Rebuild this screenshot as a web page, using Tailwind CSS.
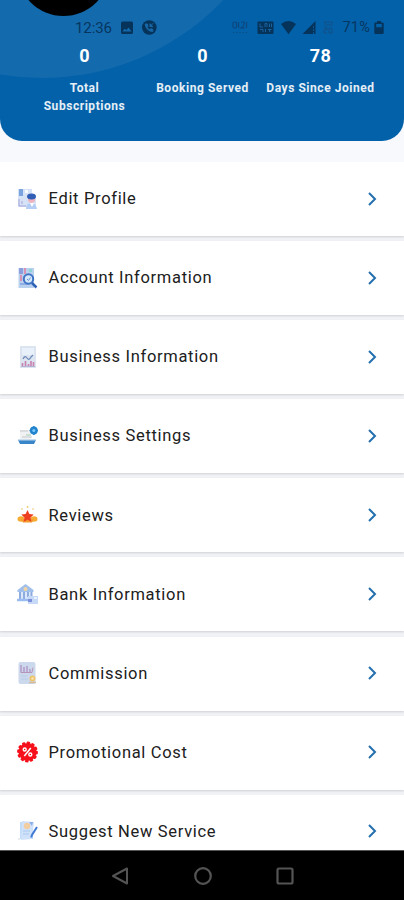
<!DOCTYPE html>
<html lang="en">
<head>
<meta charset="utf-8">
<title>Profile</title>
<script src="https://cdn.jsdelivr.net/npm/@tailwindcss/browser@4"></script>
</head>
<body class="w-[404px] h-[900px] overflow-hidden bg-[#f8f9fd] font-[Roboto,sans-serif] text-[#202020]">
<div class="flex flex-col h-[900px]">
  <header class="relative shrink-0 h-[140.5px] rounded-b-[22px] bg-[#0361a9] overflow-hidden text-white">
    <svg class="absolute inset-0" width="404" height="141"><circle cx="42" cy="-172" r="250" fill="#136aad"/><circle cx="63.5" cy="-30.3" r="46.3" fill="#000"/></svg>
    <div class="absolute inset-x-0 top-[18px] h-[20px] text-[#06365f]">
      <span class="absolute left-[75px] top-0 text-[15px] leading-[20px] -tracking-[0.1px]">12:36</span>
      <svg class="absolute left-0 top-0" width="404" height="20" fill="#06335a">
        <path fill-rule="evenodd" d="M122.500 3.500h9q1.500 0 1.500 1.500v9.500q0 1.500-1.500 1.500h-9q-1.500 0-1.500-1.500v-9.500q0-1.500 1.500-1.500zM122.500 13.500h9l-3-4-2.200 2.800-1.500-1.800z"/>
        <circle cx="149.300" cy="9.500" r="7.300"/>
        <path d="M145.300 6c0 4 3.500 7.500 7.500 7.500v-2.200l-2.200-.6-1 1c-1.200-.6-2-1.500-2.600-2.600l1-1-.6-2.100zM150 8.500l3.300-3.300M150 5.500v3h3" stroke="#1769a8" stroke-width="1" fill="#1769a8"/>
        <g fill="none" stroke="#0c477d" stroke-width="1.200"><rect x="233" y="4" width="3.500" height="6" rx="1.500"/><path d="M238.500 4v6M241 4h3q1 3-3 6h4M246.500 4v6"/><path d="M233 14.500h15" stroke-dasharray="2 1" opacity=".6"/></g>
        <rect x="257.500" y="3.500" width="16" height="12.500" rx="1"/>
        <path d="M260 5.500v3.500h3M265 9v-3.500h2v3.500M269.500 5.500v3.500M271.500 5.500v3.500M260 11.500h3v2.500M265.500 11v3M268 11.500h3.500M269.700 11.500v2.500" fill="none" stroke="#1763a0"/>
        <path d="M281 6q7.500-6 15 0l-7.500 10.200z"/>
        <path d="M302.500 16L315.500 3v13z"/><path d="M313.500 8v8" stroke="#0361a9" stroke-width=".8" stroke-dasharray="2 1"/>
        <g fill="none" stroke="#125187" stroke-width="1"><path d="M324 4h8v3M324 4l3 3h5M324 10h3v2h-3v3h3M329 15v-5h3v5zM324 7l3 2"/></g>
        <path fill-rule="evenodd" d="M377 3h4v1.500h1.500q1.200 0 1.200 1.200v9.100q0 1.200-1.200 1.200h-7q-1.200 0-1.200-1.200V5.700q0-1.200 1.200-1.200h1.500zM376.200 6v3.200h5.600v-3.200z"/>
      </svg>
      <span class="absolute left-[342.500px] top-0 text-[14.500px] leading-[20px] tracking-[0.200px]">71%</span>
    </div>
    <div class="relative grid grid-cols-[118px_118px_118px] justify-center pt-[45px] pl-[1px] text-center font-bold">
      <div><div class="text-[18px] leading-[22px]">0</div><div class="mt-[12px] text-[12px] leading-[18px] tracking-[0.550px] text-white/90">Total<br>Subscriptions</div></div>
      <div><div class="text-[18px] leading-[22px]">0</div><div class="mt-[12px] text-[12px] leading-[18px] tracking-[0.550px] text-white/90 whitespace-nowrap">Booking Served</div></div>
      <div><div class="text-[18px] leading-[22px] tracking-[0.500px]">78</div><div class="mt-[12px] text-[12px] leading-[18px] tracking-[0.550px] text-white/90 whitespace-nowrap">Days Since Joined</div></div>
    </div>
  </header>

  <main class="mt-[21.500px] h-[688px] overflow-hidden flex flex-col gap-[5.100px] bg-[#f1f2f5] text-[16.500px] tracking-[0.680px]">
    <div class="shrink-0 h-[74px] bg-white shadow-[0_1px_2px_#00000024] flex items-center pl-[17px] pr-[25.500px]">
      <svg class="mr-[10.500px]" width="21" height="22" viewBox="0 0 21 22"><path d="M1 1h14v4l4 4v10H1z" fill="#d6e3f7"/><path d="M2 1h4v7H2z" fill="#7ba4df"/><path d="M8 2h3v3H8z" fill="#f7fbff"/><path d="M2 11v7h7M5 13v3" stroke="#a5a4d8" fill="none"/><path d="M11 9h7v4q-3.500 4-7 0z" fill="#efb3bf"/><ellipse cx="14.500" cy="8.500" rx="4.500" ry="3" fill="#315fb5"/><path d="M9 21q0-6 5-6t6 6z" fill="#b4cdf4"/><path d="M13 15l2 4 2-4z" fill="#fff"/></svg>
      <span class="flex-1 pt-px">Edit Profile</span>
      <svg width="13" height="16" fill="none" stroke="#246fae" stroke-width="2"><path d="M3 2l6 6-6 6"/></svg>
    </div>
    <div class="shrink-0 h-[74px] bg-white shadow-[0_1px_2px_#00000024] flex items-center pl-[17px] pr-[25.500px]">
      <svg class="mr-[10.500px]" width="21" height="22" viewBox="0 0 21 22"><path d="M1.500 1H17v20H1.500z" fill="#b9d0ee"/><path d="M2 1h4v6H2z" fill="#8a9fdb"/><path d="M8 1v6M4 8v6" stroke="#d892b3" stroke-width="2"/><path d="M12 2h3v3h-3z" fill="#8ed4d4"/><path d="M3 17h8" stroke="#8faee5" stroke-width="2"/><circle cx="11.500" cy="12" r="4.700" fill="#d5e9fb" stroke="#3f73c5" stroke-width="2"/><path d="M10 12l1.500 1.500 2-3" stroke="#6b91d5" fill="none"/><path d="M15 16l4.500 4.500" stroke="#2f62b5" stroke-width="2.500"/></svg>
      <span class="flex-1 pt-px">Account Information</span>
      <svg width="13" height="16" fill="none" stroke="#246fae" stroke-width="2"><path d="M3 2l6 6-6 6"/></svg>
    </div>
    <div class="shrink-0 h-[74px] bg-white shadow-[0_1px_2px_#00000024] flex items-center pl-[17px] pr-[25.500px]">
      <svg class="mr-[10.500px]" width="21" height="22" viewBox="0 0 21 22"><path d="M3 0h16v22H3z" fill="#dce5ef"/><path d="M5 2h12v7H5z" fill="#e8f1fa"/><path d="M6 13q2-4 4-1t4-1l2-2" stroke="#718ebd" fill="none" stroke-width="1.300"/><path d="M5.500 21v-4M8.500 21v-6M11.500 21v-3M14 21v-6M16.500 21v-5" stroke="#c783b3" stroke-width="1.700"/><path d="M4 20.500h14" stroke="#b5b3d3"/></svg>
      <span class="flex-1 pt-px">Business Information</span>
      <svg width="13" height="16" fill="none" stroke="#246fae" stroke-width="2"><path d="M3 2l6 6-6 6"/></svg>
    </div>
    <div class="shrink-0 h-[74px] bg-white shadow-[0_1px_2px_#00000024] flex items-center pl-[17px] pr-[25.500px]">
      <svg class="mr-[10.500px]" width="21" height="22" viewBox="0 0 21 22"><path d="M3 5h11v9H3z" fill="#f0f1f3"/><path d="M3 6h8M5 12h10" stroke="#c5c9cb"/><path d="M9 10h5" stroke="#a2cdb0"/><path d="M1 15h18l-2 4H3z" fill="#3885c9"/><path d="M1 15h18" stroke="#a8c9e7" stroke-width="1.200"/><circle cx="16.800" cy="5.500" r="3.900" fill="#2384cc"/><circle cx="16.800" cy="5.500" r="1.500" fill="#79c9ff"/><path d="M16.800 1v1.500M16.800 8.500V10M12.500 5.500H14M19.500 5.500H21" stroke="#2384cc" stroke-width="1.500"/></svg>
      <span class="flex-1 pt-px">Business Settings</span>
      <svg width="13" height="16" fill="none" stroke="#246fae" stroke-width="2"><path d="M3 2l6 6-6 6"/></svg>
    </div>
    <div class="shrink-0 h-[74px] bg-white shadow-[0_1px_2px_#00000024] flex items-center pl-[17px] pr-[25.500px]">
      <svg class="mr-[10.500px]" width="21" height="22" viewBox="0 0 21 22"><ellipse cx="4" cy="15" rx="3.500" ry="2.800" fill="#f6ab32"/><ellipse cx="17" cy="15" rx="3.500" ry="2.800" fill="#f6ab32"/><path d="M4 15.500h13l-2 3H6z" fill="#f39a2e"/><path d="M10.500 6l1.900 3.900 4.300.6-3.100 3 .7 4.300-3.800-2-3.800 2 .7-4.300-3.100-3 4.300-.6z" fill="#ee401f"/><path d="M10.500 2v2M4.500 4.500l1 1M16.500 4.500l-1 1" stroke="#f3cc7a" stroke-width="1.500"/></svg>
      <span class="flex-1 pt-px">Reviews</span>
      <svg width="13" height="16" fill="none" stroke="#246fae" stroke-width="2"><path d="M3 2l6 6-6 6"/></svg>
    </div>
    <div class="shrink-0 h-[74px] bg-white shadow-[0_1px_2px_#00000024] flex items-center pl-[17px] pr-[25.500px]">
      <svg class="mr-[10.500px]" width="21" height="22" viewBox="0 0 21 22"><path d="M.5 7L8.500 1l8 6v2H.5z" fill="#a0bfed"/><path d="M2 9h13v8H2z" fill="#dbe7fa"/><circle cx="8.500" cy="6" r="2" fill="#f2d5a0"/><path d="M3 9v7M7 9v7M11 9v5M14.500 9v5" stroke="#8facdf" stroke-width="2"/><path d="M0 17h11" stroke="#9bbcf0" stroke-width="2.500"/><path d="M11 13h10v8H11z" fill="#c6d9f7"/><path d="M11 16h4v3h-4z" fill="#7d8fda"/><path d="M17 15h3" stroke="#eaf2ff" stroke-width="2"/></svg>
      <span class="flex-1 pt-px">Bank Information</span>
      <svg width="13" height="16" fill="none" stroke="#246fae" stroke-width="2"><path d="M3 2l6 6-6 6"/></svg>
    </div>
    <div class="shrink-0 h-[74px] bg-white shadow-[0_1px_2px_#00000024] flex items-center pl-[17px] pr-[25.500px]">
      <svg class="mr-[10.500px] mb-[2px]" width="21" height="22" viewBox="0 0 21 22"><rect x="1.500" width="17" height="22" rx="2" fill="#ccd9ed"/><path d="M4 3v7M7 5v5M10 4v6M13 7v3" stroke="#b49bc7" stroke-width="1.500"/><path d="M3.500 10.500H15l1-5" stroke="#b694b9" fill="none"/><path d="M4 14h6M4 17h7" stroke="#b8cbe6"/><circle cx="15.500" cy="16.500" r="3" fill="#edc36e"/><circle cx="15.500" cy="16.500" r="1.200" fill="#f7e8ae"/><path d="M12 20.500h7" stroke="#d7bb98" stroke-width="1.500"/></svg>
      <span class="flex-1 pt-px">Commission</span>
      <svg class="mb-[2px]" width="13" height="16" fill="none" stroke="#246fae" stroke-width="2"><path d="M3 2l6 6-6 6"/></svg>
    </div>
    <div class="shrink-0 h-[74px] bg-white shadow-[0_1px_2px_#00000024] flex items-center pl-[17px] pr-[25.500px]">
      <svg class="mr-[10.500px] mb-[2px]" width="21" height="22" viewBox="0 0 21 22"><circle cx="10.500" cy="11" r="9" fill="#f5101b"/><circle cx="10.500" cy="11" r="9.200" fill="none" stroke="#f5101b" stroke-width="2.400" stroke-linecap="round" stroke-dasharray="1.300 3.517"/><path d="M13.800 7l-6.500 8" stroke="#fff" stroke-width="1.500"/><circle cx="7.700" cy="8.500" r="1.500" fill="none" stroke="#fff" stroke-width="1.400"/><circle cx="13.300" cy="13.500" r="1.500" fill="none" stroke="#fff" stroke-width="1.400"/></svg>
      <span class="flex-1 pt-px">Promotional Cost</span>
      <svg class="mb-[2px]" width="13" height="16" fill="none" stroke="#246fae" stroke-width="2"><path d="M3 2l6 6-6 6"/></svg>
    </div>
    <div class="shrink-0 h-[74px] bg-white flex items-center pl-[17px] pr-[25.500px]">
      <svg class="mr-[10.500px] mb-[2px]" width="21" height="22" viewBox="0 0 21 22"><path d="M3 2h13v17H3z" fill="#c1dbf8"/><path d="M5 1l12 1-2 17-11 1z" fill="#cfe2fa"/><path d="M12 2h4l-1 4" fill="#8eaee8"/><circle cx="10" cy="6" r="3.200" fill="#f2cda1"/><path d="M6 11h7M6 14h6" stroke="#a9c8ef"/><path d="M20 7l-5 8-.8 2.500" stroke="#407ad5" stroke-width="2" fill="none"/><path d="M1 19h2" stroke="#d0dae8"/></svg>
      <span class="flex-1 pt-px">Suggest New Service</span>
      <svg class="mb-[2px]" width="13" height="16" fill="none" stroke="#246fae" stroke-width="2"><path d="M3 2l6 6-6 6"/></svg>
    </div>
  </main>
  <nav class="h-[50px] shrink-0 bg-black border-t border-[#555] flex items-center justify-center gap-[62.500px] pl-[1px]">
    <svg width="20" height="20" fill="none" stroke="#545454" stroke-width="2" stroke-linejoin="round"><path d="M17 2.500v15L3 10z"/></svg>
    <svg width="20" height="20" fill="none" stroke="#545454" stroke-width="2.200"><circle cx="10" cy="10" r="7.800"/></svg>
    <svg width="20" height="20" fill="none" stroke="#545454" stroke-width="2.200"><rect x="2.500" y="2.500" width="15" height="15" rx="1.500"/></svg>
  </nav>
</div>
</body>
</html>
